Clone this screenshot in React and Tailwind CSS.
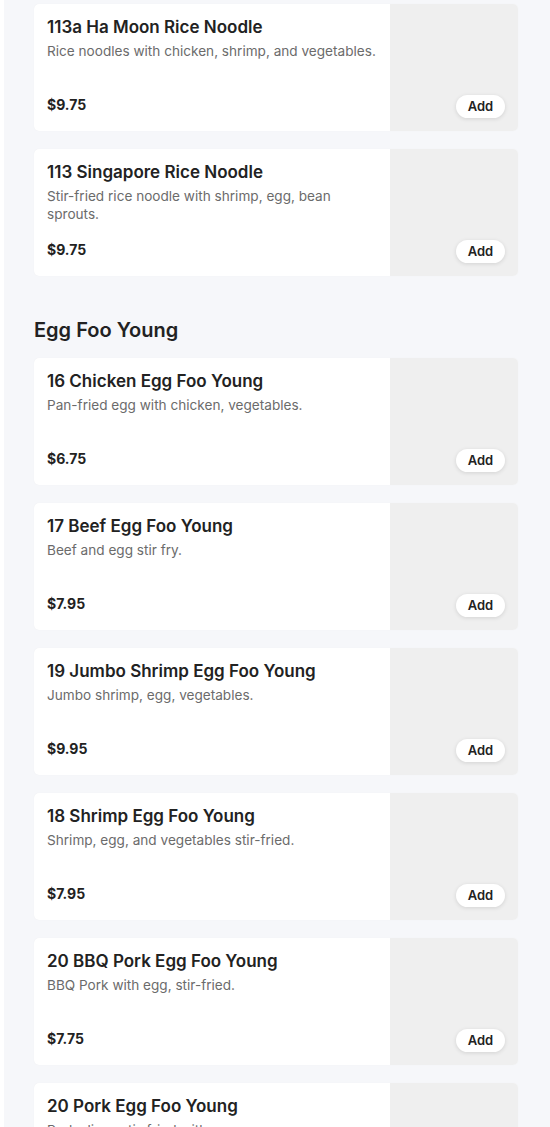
import React from 'react';

const sections = [
  {
    title: null,
    items: [
      { name: '113a Ha Moon Rice Noodle', desc: 'Rice noodles with chicken, shrimp, and vegetables.', price: '$9.75' },
      { name: '113 Singapore Rice Noodle', desc: 'Stir-fried rice noodle with shrimp, egg, bean sprouts.', price: '$9.75' },
    ],
  },
  {
    title: 'Egg Foo Young',
    items: [
      { name: '16 Chicken Egg Foo Young', desc: 'Pan-fried egg with chicken, vegetables.', price: '$6.75' },
      { name: '17 Beef Egg Foo Young', desc: 'Beef and egg stir fry.', price: '$7.95' },
      { name: '19 Jumbo Shrimp Egg Foo Young', desc: 'Jumbo shrimp, egg, vegetables.', price: '$9.95' },
      { name: '18 Shrimp Egg Foo Young', desc: 'Shrimp, egg, and vegetables stir-fried.', price: '$7.95' },
      { name: '20 BBQ Pork Egg Foo Young', desc: 'BBQ Pork with egg, stir-fried.', price: '$7.75' },
      { name: '20 Pork Egg Foo Young', desc: 'Pork slices stir-fried with egg.', price: '$7.75' },
    ],
  },
];

const MenuCard = ({ item }) => (
  <div className="flex h-[127px] rounded-[5px] bg-white shadow-[0_0_1px_rgba(0,0,0,0.06)]">
    <div className="flex flex-1 flex-col justify-between pl-[13px] pr-3 pt-[11px] pb-[16px]">
      <div>
        <h3 className="text-[17px] font-semibold leading-[24px] text-[#222]">{item.name}</h3>
        <p className="mt-[3px] text-[13.6px] leading-[18px] text-[#6b6b6b]">{item.desc}</p>
      </div>
      <div className="text-[14px] font-bold text-[#222]">{item.price}</div>
    </div>
    <div className="relative w-[128px] shrink-0 rounded-r-[5px] bg-[#efefef]">
      <button className="absolute bottom-[13px] right-[13px] h-[23px] w-[49px] rounded-full bg-white text-[13px] font-semibold text-[#222] shadow-[0_1px_4px_rgba(0,0,0,0.12)]">
        Add
      </button>
    </div>
  </div>
);

export default function App() {
  return (
    <div className="min-h-screen bg-white pl-[4px]" style={{ fontFamily: 'Inter, "Noto Sans", sans-serif' }}>
      <div className="min-h-screen bg-[#f6f7fa] pl-[30px] pr-[32px] pt-[4px]">
        {sections.map((section, i) => (
          <div key={i} className={section.title ? 'mt-[18px]' : ''}>
            {section.title && (
              <h2 className="mb-[14px] pt-[22px] text-[20px] font-semibold leading-[28px] text-[#222]">{section.title}</h2>
            )}
            <div className="flex flex-col gap-[18px]">
              {section.items.map((item) => (
                <MenuCard key={item.name} item={item} />
              ))}
            </div>
          </div>
        ))}
      </div>
    </div>
  );
}
